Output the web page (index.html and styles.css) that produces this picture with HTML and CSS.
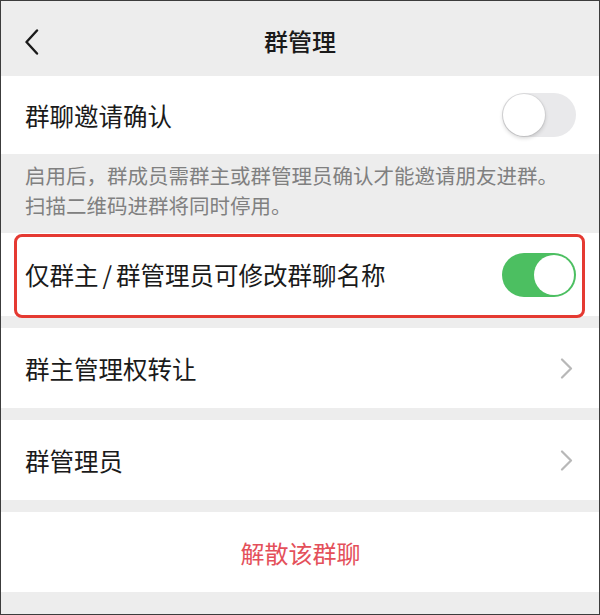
FILE: index.html
```html
<!DOCTYPE html>
<html lang="zh-CN">
<head>
    <meta charset="UTF-8">
    <meta name="viewport" content="width=device-width, initial-scale=1.0">
    <title>群管理</title>
    <link rel="stylesheet" href="styles.css">
</head>
<body>
    <div class="screen">
        <!-- top navigation -->
        <div class="navbar">
            <svg class="back" width="16" height="26" viewBox="0 0 16 26">
                <path d="M13 1.5 L2.5 13 L13 24.5" fill="none" stroke="#1a1a1a" stroke-width="2.4" stroke-linecap="round" stroke-linejoin="round"/>
            </svg>
            <div class="title">群管理</div>
        </div>

        <div class="cell">
            <span class="cell-label">群聊邀请确认</span>
            <span class="switch"><span class="knob"></span></span>
        </div>
        <div class="tip">
            启用后，群成员需群主或群管理员确认才能邀请朋友进群。<br>
            扫描二维码进群将同时停用。
        </div>

        <div class="cell cell-tall marked">
            <span class="cell-label">仅群主<span class="slash">/</span>群管理员可修改群聊名称</span>
            <span class="switch on"><span class="knob"></span></span>
            <span class="highlight"></span>
        </div>

        <div class="gap"></div>
        <div class="cell">
            <span class="cell-label">群主管理权转让</span>
            <svg class="arrow" width="13" height="21" viewBox="0 0 13 21">
                <path d="M2 1.5 L11 10.5 L2 19.5" fill="none" stroke="#b8b8b8" stroke-width="2.2" stroke-linecap="round" stroke-linejoin="round"/>
            </svg>
        </div>

        <div class="gap"></div>
        <div class="cell">
            <span class="cell-label">群管理员</span>
            <svg class="arrow" width="13" height="21" viewBox="0 0 13 21">
                <path d="M2 1.5 L11 10.5 L2 19.5" fill="none" stroke="#b8b8b8" stroke-width="2.2" stroke-linecap="round" stroke-linejoin="round"/>
            </svg>
        </div>

        <div class="gap"></div>
        <div class="cell cell-center">
            <span class="danger">解散该群聊</span>
        </div>
    </div>
</body>
</html>
```

FILE: styles.css
```css
body {
    margin: 0;
    font-family: "Noto Sans CJK SC", "Noto Sans", sans-serif;
    color: #1a1a1a;
}
.screen {
    width: 600px;
    height: 615px;
    box-sizing: border-box;
    border: 1px solid #3c3c3c;
    background: #ededed;
    overflow: hidden;
}
.navbar {
    height: 75px;
    display: flex;
    align-items: center;
    justify-content: center;
    position: relative;
}
.back {
    position: absolute;
    left: 23px;
    top: 28px;
}
.title {
    font-size: 24px;
    font-weight: 500;
    margin-top: 4px;
}
.cell {
    background: #fff;
    height: 78px;
    padding: 0 23px 0 24px;
    display: flex;
    align-items: center;
    justify-content: space-between;
    position: relative;
}
.cell-tall {
    height: 83px;
}
.cell-center {
    justify-content: center;
}
.cell-label {
    font-size: 24.5px;
}
.slash {
    margin: 0 4px;
}
.tip {
    font-size: 20.5px;
    line-height: 30px;
    color: #808080;
    padding: 6px 24px 13px;
}
.gap {
    height: 12px;
}
.gap + .cell {
    height: 80px;
}
.switch {
    width: 74px;
    height: 44px;
    border-radius: 22px;
    background: #e9e9eb;
    position: relative;
    flex-shrink: 0;
}
.switch .knob {
    position: absolute;
    left: 1px;
    top: 1px;
    width: 42px;
    height: 42px;
    border-radius: 50%;
    background: #fff;
    box-shadow: 0 2px 4px rgba(0,0,0,0.18), 0 0 0 1px rgba(0,0,0,0.05);
}
.switch.on {
    background: #4cbf61;
}
.switch.on .knob {
    left: auto;
    right: 2px;
    top: 2px;
    width: 40px;
    height: 40px;
    box-shadow: none;
}
.arrow {
    margin-right: 3px;
}
.danger {
    color: #e4505a;
    font-size: 24px;
}
.highlight {
    position: absolute;
    left: 13px;
    right: 14px;
    top: 1px;
    bottom: -2px;
    border: 3.5px solid #e53a32;
    border-radius: 8px;
}
```
